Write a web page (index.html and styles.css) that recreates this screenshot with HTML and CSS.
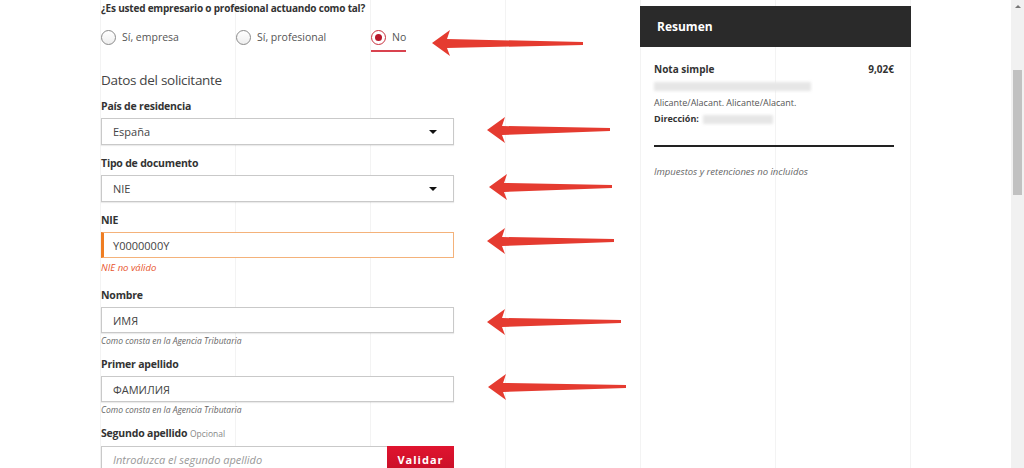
FILE: index.html
```html
<!DOCTYPE html>
<html lang="es">
<head>
  <meta charset="UTF-8" />
  <meta name="viewport" content="width=device-width, initial-scale=1.0"/>
  <title>Solicitud nota simple</title>
  <link rel="stylesheet" href="styles.css">
</head>
<body>

  <div class="page">
    <form class="form-col">
      <p class="question">¿Es usted empresario o profesional actuando como tal?</p>
      <div class="radio-row">
        <label class="radio"><span class="dot"></span>Sí, empresa</label>
        <label class="radio"><span class="dot"></span>Sí, profesional</label>
        <label class="radio checked"><span class="dot"></span>No</label>
      </div>

      <h3 class="section">Datos del solicitante</h3>

      <div class="field">
        <label class="lbl">País de residencia</label>
        <div class="select">España<span class="caret"></span></div>
      </div>

      <div class="field">
        <label class="lbl">Tipo de documento</label>
        <div class="select">NIE<span class="caret"></span></div>
      </div>

      <div class="field">
        <label class="lbl">NIE</label>
        <div class="input invalid">Y0000000Y</div>
        <p class="error">NIE no válido</p>
      </div>

      <div class="field">
        <label class="lbl">Nombre</label>
        <div class="input">ИМЯ</div>
        <p class="hint">Como consta en la Agencia Tributaria</p>
      </div>

      <div class="field">
        <label class="lbl">Primer apellido</label>
        <div class="input">ФАМИЛИЯ</div>
        <p class="hint">Como consta en la Agencia Tributaria</p>
      </div>

      <div class="field">
        <label class="lbl">Segundo apellido <span class="optional">Opcional</span></label>
        <div class="input-group">
          <div class="input placeholder">Introduzca el segundo apellido</div>
          <button type="button" class="btn-validar">Validar</button>
        </div>
      </div>
    </form>

    <aside class="summary">
      <div class="summary-head">Resumen</div>
      <div class="summary-body">
        <div class="summary-row">
          <span class="item">Nota simple</span>
          <span class="price">9,02€</span>
        </div>
        <div class="blur blur-wide"></div>
        <p class="place">Alicante/Alacant. Alicante/Alacant.</p>
        <p class="address"><b>Dirección:</b><span class="blur blur-short"></span></p>
        <hr class="divider">
        <p class="taxes">Impuestos y retenciones no incluidos</p>
      </div>
    </aside>
  </div>

  <!-- flechas rojas encima de la captura -->
  <svg class="arrows" width="1024" height="468" viewBox="0 0 1024 468">
    <g fill="#e53b30">
      <path d="M432 43 L450 30 L447 39 L583 42 L583 45 L447 48 L450 56 Z"/>
      <path d="M487 130 L505 117 L502 126 L610 128 L610 131 L502 135 L505 143 Z"/>
      <path d="M489 187 L507 174 L504 183 L612 185 L612 188 L504 192 L507 200 Z"/>
      <path d="M487 241 L505 228 L502 237 L614 239 L614 242 L502 246 L505 254 Z"/>
      <path d="M487 322 L505 309 L502 318 L621 320 L621 323 L502 327 L505 335 Z"/>
      <path d="M488 387 L506 374 L503 383 L626 385 L626 388 L503 392 L506 400 Z"/>
    </g>
  </svg>

  <div class="scrollbar">
    <span class="scroll-up"></span>
    <span class="scroll-thumb"></span>
  </div>

</body>
</html>
```

FILE: styles.css
```css
html, body {
  height: 100%;
  overflow: hidden;
}

body {
  margin: 0;
  font-family: 'Open Sans', sans-serif;
  color: #333;
  background-color: #fff;
  background-image: linear-gradient(to right, #f3f3f3 1px, transparent 1px);
  background-size: 135px 100%;
  background-position: 100px 0;
}

.page {
  display: flex;
  gap: 186px;
  padding-left: 101px;
}

.form-col {
  width: 353px;
  margin: 0;
}

.question {
  margin: 0;
  font-size: 10px;
  font-weight: 700;
  letter-spacing: -0.2px;
  line-height: 16px;
  color: #333;
}

.radio-row {
  display: grid;
  grid-template-columns: 135px 135px 135px;
  margin-top: 11px;
}

.radio {
  display: inline-flex;
  align-items: center;
  gap: 6px;
  height: 20px;
  padding-bottom: 3px;
  font-size: 10.5px;
  color: #555;
  border-bottom: 2px solid transparent;
  justify-self: start;
}

.radio .dot {
  width: 13px;
  height: 13px;
  border: 1px solid #8a8a8a;
  border-radius: 50%;
  background: linear-gradient(#fff, #eee);
  position: relative;
}

.radio.checked {
  border-bottom-color: #d9434f;
}

.radio.checked .dot {
  border-color: #c9303d;
  background: #fff;
}

.radio.checked .dot::after {
  content: "";
  position: absolute;
  left: 3px;
  top: 3px;
  width: 7px;
  height: 7px;
  border-radius: 50%;
  background: #b8162a;
}

.section {
  margin: 18px 0 8px;
  font-size: 13.5px;
  font-weight: 400;
  letter-spacing: -0.3px;
  line-height: 20px;
  color: #444;
}

.field {
  margin-bottom: 10px;
}

.lbl {
  display: block;
  font-size: 10.5px;
  font-weight: 700;
  letter-spacing: -0.2px;
  line-height: 16px;
  margin-bottom: 4px;
  color: #333;
}

.optional {
  font-size: 8.5px;
  font-weight: 400;
  letter-spacing: 0;
  color: #888;
}

.select, .input {
  box-sizing: border-box;
  height: 27px;
  display: flex;
  align-items: center;
  padding: 0 11px;
  font-size: 11px;
  color: #444;
  background: #fff;
  border: 1px solid #c9c9c9;
  box-shadow: 0 1px 1px rgba(0, 0, 0, 0.08);
}

.select {
  justify-content: space-between;
}

.caret {
  width: 0;
  height: 0;
  border-left: 4px solid transparent;
  border-right: 4px solid transparent;
  border-top: 4px solid #111;
  margin-right: 5px;
}

.input {
  height: 26px;
}

.input.invalid {
  border-color: #f4b27a;
  border-left: 3px solid #ef7d22;
  padding-left: 9px;
  box-shadow: none;
}

.error, .hint {
  margin: 0;
  font-style: italic;
  line-height: 12px;
}

.error {
  margin-top: 4px;
  margin-bottom: 13px;
  font-size: 9.5px;
  color: #e8542c;
}

.hint {
  margin-top: 2px;
  margin-bottom: -1px;
  font-size: 8.5px;
  color: #666;
}

.input-group {
  display: flex;
}

.input-group .input {
  flex: 1;
  height: 27px;
  border-right: none;
}

.placeholder {
  font-style: italic;
  color: #999;
}

.btn-validar {
  width: 67px;
  height: 27px;
  border: none;
  background: linear-gradient(#e0142f, #c70f28);
  color: #fff;
  font-family: 'Open Sans', sans-serif;
  font-size: 11px;
  font-weight: 700;
  letter-spacing: 1px;
  cursor: pointer;
}

.summary {
  width: 271px;
  margin-top: 6px;
}

.summary-head {
  height: 41px;
  display: flex;
  align-items: center;
  padding-left: 17px;
  background: #2a2a2a;
  color: #fff;
  font-size: 12px;
  font-weight: 700;
}

.summary-body {
  padding: 14px 17px 0 14px;
}

.summary-row {
  display: flex;
  justify-content: space-between;
  font-size: 10px;
  font-weight: 700;
  line-height: 16px;
  color: #333;
}

.blur {
  display: inline-block;
  height: 9px;
  background: #e6e6e6;
  filter: blur(1.5px);
}

.blur-wide {
  display: block;
  width: 157px;
  margin-top: 5px;
}

.blur-short {
  width: 70px;
  margin-left: 4px;
  vertical-align: middle;
}

.place, .address {
  margin: 0;
  font-size: 9px;
  line-height: 15px;
  color: #555;
}

.place {
  margin-top: 4px;
}

.address {
  margin-top: 1px;
  color: #333;
}

.divider {
  border: none;
  border-top: 2px solid #222;
  margin: 19px 0 0;
}

.taxes {
  margin: 18px 0 0;
  font-size: 9.5px;
  font-style: italic;
  color: #666;
}

.arrows {
  position: absolute;
  left: 0;
  top: 0;
  pointer-events: none;
}

.scrollbar {
  position: fixed;
  right: 0;
  top: 0;
  width: 13px;
  height: 100%;
  background: #f1f1f1;
}

.scroll-up {
  position: absolute;
  left: 4px;
  top: 5px;
  border-left: 3px solid transparent;
  border-right: 3px solid transparent;
  border-bottom: 3px solid #777;
}

.scroll-thumb {
  position: absolute;
  left: 2px;
  top: 70px;
  width: 9px;
  height: 125px;
  background: #c1c1c1;
}
```
